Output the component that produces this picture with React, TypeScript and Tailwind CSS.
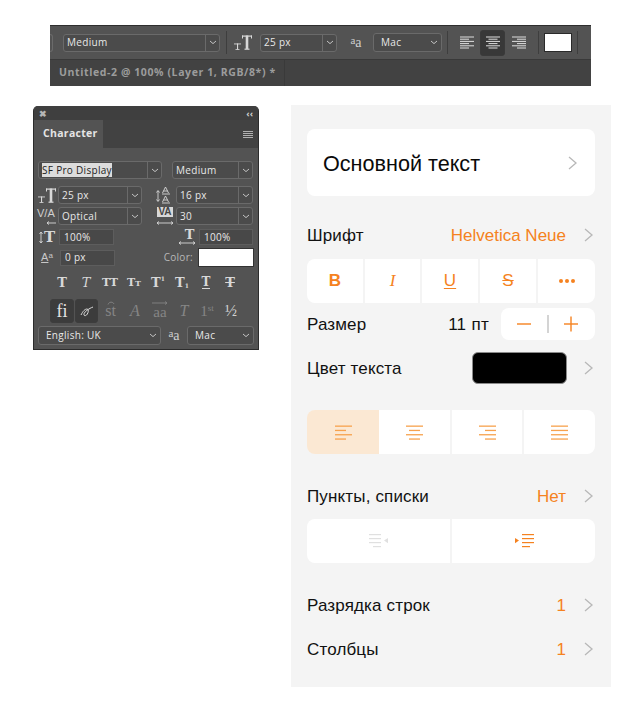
import type { ReactNode } from "react";

const ORANGE = "#f58220";

function PsChevron({ className = "" }: { className?: string }) {
  return (
    <svg width="8" height="5" viewBox="0 0 8 5" className={className}>
      <path d="M1 1l3 2.6L7 1" fill="none" stroke="#c4c4c4" strokeWidth="1" />
    </svg>
  );
}

function PsSelect({
  label,
  className,
  split = true,
}: {
  label: ReactNode;
  className: string;
  split?: boolean;
}) {
  return (
    <div
      className={`flex shrink-0 items-center rounded-[3px] border border-[#6a6a6a] bg-[#4b4b4b] text-[10px] font-medium tracking-[0.3px] text-[#e8e8e8] ${className}`}
    >
      <div className="min-w-0 flex-1 truncate pl-[3px]">{label}</div>
      <div
        className={`flex h-full w-[14px] items-center justify-center ${split ? "border-l border-[#6a6a6a]" : ""}`}
      >
        <PsChevron />
      </div>
    </div>
  );
}

function PsInput({ label, className }: { label: string; className: string }) {
  return (
    <div
      className={`flex shrink-0 items-center border border-[#5d5d5d] bg-[#484848] pl-[4px] text-[10px] font-medium tracking-[0.3px] text-[#e8e8e8] ${className}`}
    >
      {label}
    </div>
  );
}

// the double T size icon, drawn because the big T has a very thin bar
function TextSizeIcon() {
  return (
    <svg width="18" height="15" viewBox="0 0 18 15" className="shrink-0">
      <g fill="#d8d8d8">
        <rect x="8" y="0.5" width="10" height="1.2" />
        <rect x="8" y="0.5" width="1" height="3" />
        <rect x="17" y="0.5" width="1" height="3" />
        <rect x="11.7" y="0.5" width="2.6" height="13.5" />
        <rect x="10.5" y="13.6" width="5" height="1.2" />
        <rect x="0" y="8.5" width="7" height="0.9" />
        <rect x="3" y="8.5" width="1.1" height="6" />
        <rect x="1.5" y="14" width="4" height="0.8" />
      </g>
    </svg>
  );
}

function AaIcon() {
  return (
    <div className="flex w-[14px] shrink-0 items-end justify-center font-['Liberation_Serif',serif] leading-none text-[#cfcfcf]">
      <span className="mb-[4px] text-[11px]">a</span>
      <span className="text-[14px]">a</span>
    </div>
  );
}

function AlignLines({ mode, color }: { mode: "left" | "center" | "right"; color: string }) {
  const widths = [14, 9, 14, 9, 14, 9];
  return (
    <svg width="14" height="13" viewBox="0 0 14 13">
      {widths.map((w, i) => {
        const x = mode === "left" ? 0 : mode === "right" ? 14 - w : (14 - w) / 2;
        return <rect key={i} x={x} y={i * 2.2 + 0.5} width={w} height="1" fill={color} />;
      })}
    </svg>
  );
}

function TopBar() {
  return (
    <div className="ml-[50px] w-[541px] font-['Open_Sans',sans-serif]">
      <div className="flex h-[34px] items-center border-t border-[#2e2e2e] bg-[#535353]">
        <div className="h-[18px] w-[3px] rounded-r-[3px] border-y border-r border-[#6a6a6a]" />
        <PsSelect label="Medium" className="ml-[10px] h-[18px] w-[157px]" />
        <div className="ml-[6px] h-[23px] w-px bg-[#3e3e3e]" />
        <div className="ml-[6px] flex w-[20px] justify-center">
          <TextSizeIcon />
        </div>
        <PsSelect label="25 px" className="ml-[7px] h-[18px] w-[77px]" />
        <div className="ml-[12px]">
          <AaIcon />
        </div>
        <PsSelect label={<span className="pl-[4px]">Mac</span>} split={false} className="ml-[10px] h-[19px] w-[69px]" />
        <div className="ml-[5px] h-[23px] w-px bg-[#3e3e3e]" />
        <div className="ml-[12px] flex">
          <AlignLines mode="left" color="#dedede" />
        </div>
        <div className="ml-[6px] flex h-[26px] w-[25px] items-center justify-center rounded-[3px] border border-[#3a3a3a] bg-[#383838]">
          <AlignLines mode="center" color="#dedede" />
        </div>
        <div className="ml-[7px] flex">
          <AlignLines mode="right" color="#dedede" />
        </div>
        <div className="ml-[12px] h-[23px] w-px bg-[#3e3e3e]" />
        <div className="ml-[5px] h-[19px] w-[28px] border border-[#2a2a2a] bg-white" />
        <div className="ml-[5px] h-[23px] w-px bg-[#3e3e3e]" />
      </div>
      <div className="flex h-[27px] items-center border-t border-[#393939] bg-[#424242]">
        <div className="flex h-full w-[235px] items-center border-r border-[#3a3a3a] pl-[9px] text-[10.5px] font-bold tracking-[0.6px] text-[#9c9c9c]">
          Untitled-2 @ 100% (Layer 1, RGB/8*) *
        </div>
      </div>
    </div>
  );
}

function SerifT({ children }: { children: ReactNode }) {
  return <div className="flex w-[24px] justify-center">{children}</div>;
}

function CharacterPanel() {
  return (
    <div className="h-[244px] w-[226px] shrink-0 overflow-hidden rounded-t-[5px] border-x border-b border-[#2c2c2c] bg-[#535353] font-['Open_Sans',sans-serif]">
      <div className="flex h-[14px] items-center justify-between bg-[#3f3f3f] px-[5px]">
        <span className="text-[9px] font-bold leading-none text-[#b5b5b5]">✖</span>
        <span className="text-[9px] font-bold leading-none text-[#d0d0d0]">‹‹</span>
      </div>
      <div className="flex h-[28px] bg-[#424242]">
        <div className="flex w-[69px] items-center bg-[#535353] pl-[9px] text-[10.5px] font-bold tracking-[0.3px] text-[#e4e4e4]">
          Character
        </div>
        <div className="flex flex-1 items-center justify-end pr-[5px]">
          <div className="flex w-[10px] flex-col gap-[1px]">
            <div className="h-px bg-[#b0b0b0]" />
            <div className="h-px bg-[#b0b0b0]" />
            <div className="h-px bg-[#b0b0b0]" />
            <div className="h-px bg-[#b0b0b0]" />
          </div>
        </div>
      </div>

      <div className="mt-[13px] flex h-[18px] pl-[4px]">
        <PsSelect
          label={<span className="bg-[#dcdcdc] text-[#1d1d1d]">SF Pro Display</span>}
          className="w-[124px]"
        />
        <PsSelect label="Medium" className="ml-[10px] w-[81px]" />
      </div>

      <div className="mt-[7px] flex h-[18px] items-center pl-[3px]">
        <div className="flex w-[20px] justify-center">
          <TextSizeIcon />
        </div>
        <PsSelect label="25 px" className="ml-[1px] h-full w-[84px]" />
        <svg width="20" height="18" viewBox="0 0 20 18" className="ml-[13px] shrink-0">
          <g fill="none" stroke="#d8d8d8" strokeWidth="0.9">
            <path d="M3 5v10M1.5 6.5L3 4.5l1.5 2M1.5 13.5L3 15.5l1.5-2" />
            <path d="M7.5 7L10.5 1l3 6M8.5 5h4M7 8h8" />
            <path d="M7.5 16L10.5 10l3 6M8.5 14h4M7 17h8" />
          </g>
        </svg>
        <PsSelect label="16 px" className="ml-[1px] h-full w-[77px]" />
      </div>

      <div className="mt-[3px] flex h-[18px] items-center pl-[3px]">
        <div className="relative h-[18px] w-[20px] font-['Liberation_Sans',sans-serif] text-[11px] leading-[13px] text-[#d0d0d0]">
          V/A
          <svg width="10" height="4" viewBox="0 0 10 4" className="absolute bottom-0 right-[1px]">
            <path d="M10 2H1M3 .5L1 2l2 1.5" fill="none" stroke="#d8d8d8" strokeWidth="0.9" />
          </svg>
        </div>
        <PsSelect label="Optical" className="ml-[1px] h-full w-[84px]" />
        <div className="relative ml-[13px] flex h-[18px] w-[20px] justify-center font-['Liberation_Sans',sans-serif]">
          <span className="h-[10px] bg-[#d8d8d8] px-px text-[10px] font-bold leading-[10px] text-[#444444]">VA</span>
          <svg width="18" height="4" viewBox="0 0 18 4" className="absolute bottom-0 left-[1px]">
            <path d="M1 2h16M3 .5L1 2l2 1.5M15 .5L17 2l-2 1.5" fill="none" stroke="#d8d8d8" strokeWidth="0.9" />
          </svg>
        </div>
        <PsSelect label="30" className="ml-[1px] h-full w-[77px]" />
      </div>

      <div className="mt-[4px] flex h-[16px] items-center pl-[3px]">
        <div className="flex w-[20px] items-center justify-center gap-[1px]">
          <svg width="4" height="13" viewBox="0 0 4 13" className="shrink-0">
            <path d="M2 1v11M.5 3L2 1l1.5 2M.5 10L2 12l1.5-2" fill="none" stroke="#d8d8d8" strokeWidth="0.9" />
          </svg>
          <span className="font-['DejaVu_Serif',serif] text-[15px] font-bold leading-none text-[#d8d8d8]">T</span>
        </div>
        <PsInput label="100%" className="ml-[2px] h-full w-[55px]" />
        <div className="relative ml-[63px] flex h-[16px] w-[22px] justify-center pl-[3px]">
          <span className="font-['DejaVu_Serif',serif] text-[13px] font-bold leading-[12px] text-[#d8d8d8]">T</span>
          <svg width="18" height="4" viewBox="0 0 18 4" className="absolute bottom-0 left-[1px]">
            <path d="M1 2h16M3 .5L1 2l2 1.5M15 .5L17 2l-2 1.5" fill="none" stroke="#d8d8d8" strokeWidth="0.9" />
          </svg>
        </div>
        <PsInput label="100%" className="h-full w-[54px]" />
      </div>

      <div className="mt-[3px] flex h-[19px] items-center pl-[3px]">
        <div className="flex w-[20px] items-start justify-center font-['Liberation_Sans',sans-serif] text-[11px] leading-none text-[#c8c8c8]">
          <span className="underline">A</span>
          <span className="text-[8px]">a</span>
        </div>
        <PsInput label="0 px" className="ml-[3px] h-[16px] w-[55px]" />
        <div className="w-[83px] pr-[5px] text-right text-[10px] font-medium tracking-[0.3px] text-[#b8b8b8]">Color:</div>
        <div className="h-[19px] w-[56px] border border-[#333333] bg-white" />
      </div>

      <div className="mt-[6px] flex h-[18px] items-center pl-[16px] font-['DejaVu_Serif',serif] text-[13px] leading-none text-[#d8d8d8]">
        <SerifT><span className="font-bold">T</span></SerifT>
        <SerifT><span className="italic">T</span></SerifT>
        <SerifT><span className="text-[11px] font-bold">TT</span></SerifT>
        <SerifT><span className="text-[11px] font-bold">T<span className="text-[8px]">T</span></span></SerifT>
        <SerifT><span className="flex items-start font-bold">T<span className="text-[6px]">1</span></span></SerifT>
        <SerifT><span className="flex items-end font-bold">T<span className="text-[6px]">1</span></span></SerifT>
        <SerifT><span className="border-b border-[#d8d8d8] text-[12px] font-bold leading-[12px]">T</span></SerifT>
        <SerifT><span className="font-bold line-through">T</span></SerifT>
      </div>

      <div className="mt-[8px] flex h-[24px] items-center pl-[16px] font-['Liberation_Serif',serif] leading-none">
        <div className="flex h-[24px] w-[24px] items-center justify-center rounded-[3px] border border-[#3d3d3d] bg-[#3c3c3c] text-[18px] text-[#e4e4e4]">fi</div>
        <div className="ml-px flex h-[24px] w-[23px] items-center justify-center rounded-[3px] border border-[#3d3d3d] bg-[#3c3c3c]">
          <svg width="14" height="12" viewBox="0 0 14 12">
            <path
              d="M1 10c2-4 4-6 6-6 2 0 1.600 4-.5 6-1.500 1.300-3 .6-2.500-1.200C4.800 6.500 9 3.500 13 2"
              fill="none"
              stroke="#dcdcdc"
              strokeWidth="1"
            />
          </svg>
        </div>
        <div className="relative flex w-[25px] justify-center text-[16px] text-[#858585]">
          st
          <svg width="8" height="4" viewBox="0 0 8 4" className="absolute -top-[2px] left-[9px]">
            <path d="M1 3.500C2 .5 6 .5 7 3" fill="none" stroke="#858585" strokeWidth="0.9" />
          </svg>
        </div>
        <div className="flex w-[24px] justify-center text-[16px] italic text-[#858585]">A</div>
        <div className="relative flex w-[26px] justify-center pt-[3px] text-[15px] text-[#858585]">
          aa
          <svg width="16" height="4" viewBox="0 0 16 4" className="absolute -top-[1px] left-[5px]">
            <path d="M0 2h15M13 .5L15 2l-2 1.500" fill="none" stroke="#858585" strokeWidth="0.9" />
          </svg>
        </div>
        <div className="flex w-[22px] justify-center text-[16px] italic text-[#858585]">T</div>
        <div className="flex w-[24px] justify-center text-[15px] text-[#858585]">
          <span className="flex items-start">1<span className="text-[9px]">st</span></span>
        </div>
        <div className="flex w-[24px] justify-center text-[16px] text-[#d0d0d0]">½</div>
      </div>

      <div className="mt-[3px] flex h-[19px] items-center pl-[4px]">
        <PsSelect label={<span className="pl-[4px]">English: UK</span>} split={false} className="h-full w-[123px]" />
        <div className="ml-[6px]">
          <AaIcon />
        </div>
        <PsSelect label={<span className="pl-[4px]">Mac</span>} split={false} className="ml-[6px] h-full w-[67px]" />
      </div>
    </div>
  );
}

function Chevron({ className = "" }: { className?: string }) {
  return (
    <svg width="9" height="14" viewBox="0 0 9 14" className={`shrink-0 ${className}`}>
      <path d="M1 1l7 6-7 6" fill="none" stroke="#b8b8b8" strokeWidth="1.3" />
    </svg>
  );
}

function SettingRow({
  label,
  value,
  className,
}: {
  label: string;
  value: string;
  className: string;
}) {
  return (
    <div className={`flex h-[30px] items-center pr-[2px] ${className}`}>
      <div className="flex-1 pt-[2px] text-[17px] tracking-[0.15px] text-[#111111]">{label}</div>
      <div className="pt-[2px] text-[17px] text-[#f58220]">{value}</div>
      <Chevron className="ml-[18px]" />
    </div>
  );
}

function StyleCell({ children, className = "" }: { children: ReactNode; className?: string }) {
  return (
    <div className={`flex items-center justify-center bg-white text-[17px] text-[#f58220] ${className}`}>
      {children}
    </div>
  );
}

function OrangeLines({ mode }: { mode: "left" | "center" | "right" | "justify" }) {
  const rows = mode === "justify" ? [17, 17, 17, 17] : [17, 11, 17, 11];
  return (
    <svg width="17" height="15" viewBox="0 0 17 15">
      {rows.map((w, i) => {
        const x = mode === "left" ? 0 : mode === "right" ? 17 - w : (17 - w) / 2;
        return <rect key={i} x={x} y={i * 4.3 + 0.5} width={w} height="1.3" fill="#f7a24e" />;
      })}
    </svg>
  );
}

function IndentIcon({ color, flipped }: { color: string; flipped?: boolean }) {
  return (
    <svg width="20" height="16" viewBox="0 0 20 16">
      {flipped ? (
        <>
          {[0, 1, 2, 3].map((i) => (
            <rect key={i} x={i === 3 ? 4 : 0} y={1 + i * 4} width={i === 3 ? 8 : 12} height="1.2" fill={color} />
          ))}
          <path d="M15 7.600l4-2.600v5.200z" fill={color} />
        </>
      ) : (
        <>
          <path d="M1 5v5.200l4-2.600z" fill={color} />
          {[0, 1, 2, 3].map((i) => (
            <rect key={i} x="8" y={1 + i * 4} width={i === 3 ? 8 : 12} height="1.2" fill={color} />
          ))}
        </>
      )}
    </svg>
  );
}

function SidePanel() {
  return (
    <div className="-mt-px ml-[32px] w-[320px] shrink-0 bg-[#f4f4f4] px-[16px] pb-[23px] pt-[24px] font-['Liberation_Sans',sans-serif]">
      <div className="flex h-[67px] items-center justify-between rounded-[8px] bg-white pl-[16px] pr-[18px]">
        <div className="pt-[3px] text-[21.6px] text-[#0a0a0a]">Основной текст</div>
        <Chevron />
      </div>

      <SettingRow label="Шрифт" value="Helvetica Neue" className="mt-[24px]" />

      <div className="mt-[9px] grid h-[44px] grid-cols-[56px_55px_56px_56px_57px] gap-[2px] overflow-hidden rounded-[8px]">
        <StyleCell><span className="font-bold">B</span></StyleCell>
        <StyleCell><span className="font-['Liberation_Serif',serif] italic">I</span></StyleCell>
        <StyleCell><span className="underline underline-offset-2">U</span></StyleCell>
        <StyleCell><span className="line-through">S</span></StyleCell>
        <StyleCell>
          <div className="flex gap-[2px]">
            <div className="h-[4px] w-[4px] rounded-full bg-[#f58220]" />
            <div className="h-[4px] w-[4px] rounded-full bg-[#f58220]" />
            <div className="h-[4px] w-[4px] rounded-full bg-[#f58220]" />
          </div>
        </StyleCell>
      </div>

      <div className="mt-[5px] flex h-[32px] items-center">
        <div className="flex-1 pt-[2px] text-[17px] tracking-[0.15px] text-[#111111]">Размер</div>
        <div className="pt-[2px] text-[17px] tracking-[0.3px] text-[#111111]">11 пт</div>
        <div className="ml-[12px] flex h-[32px] w-[94px] items-center justify-center rounded-[8px] bg-white">
          <svg width="62" height="18" viewBox="0 0 62 18">
            <rect x="0" y="8.300" width="14" height="1.400" fill={ORANGE} />
            <rect x="30" y="0" width="2" height="18" fill="#d4d4d4" />
            <rect x="47" y="8.300" width="14" height="1.400" fill={ORANGE} />
            <rect x="53.300" y="1.500" width="1.400" height="15" fill={ORANGE} />
          </svg>
        </div>
      </div>

      <div className="mt-[12px] flex h-[32px] items-center pr-[2px]">
        <div className="flex-1 pt-[2px] text-[17px] tracking-[0.15px] text-[#111111]">Цвет текста</div>
        <div className="h-[32px] w-[95px] rounded-[6px] border border-[#8a8a8a] bg-black" />
        <Chevron className="ml-[17px]" />
      </div>

      <div className="mt-[26px] flex h-[44px] overflow-hidden rounded-[8px]">
        <StyleCell className="w-[72px] !bg-[#fbe8d3]"><OrangeLines mode="left" /></StyleCell>
        <StyleCell className="w-[71px]"><OrangeLines mode="center" /></StyleCell>
        <StyleCell className="ml-[2px] w-[70px]"><OrangeLines mode="right" /></StyleCell>
        <StyleCell className="ml-[2px] w-[71px]"><OrangeLines mode="justify" /></StyleCell>
      </div>

      <SettingRow label="Пункты, списки" value="Нет" className="mt-[27px]" />

      <div className="mt-[8px] grid h-[44px] grid-cols-[143px_143px] gap-[2px] overflow-hidden rounded-[8px]">
        <StyleCell><IndentIcon color="#e0e0e0" flipped /></StyleCell>
        <StyleCell><IndentIcon color={ORANGE} /></StyleCell>
      </div>

      <SettingRow label="Разрядка строк" value="1" className="mt-[27px]" />
      <SettingRow label="Столбцы" value="1" className="mt-[14px]" />
    </div>
  );
}

export default function App() {
  return (
    <div className="min-h-[726px] bg-white pt-[25px]">
      <TopBar />
      <div className="mt-[20px] flex items-start pl-[33px]">
        <CharacterPanel />
        <SidePanel />
      </div>
    </div>
  );
}
